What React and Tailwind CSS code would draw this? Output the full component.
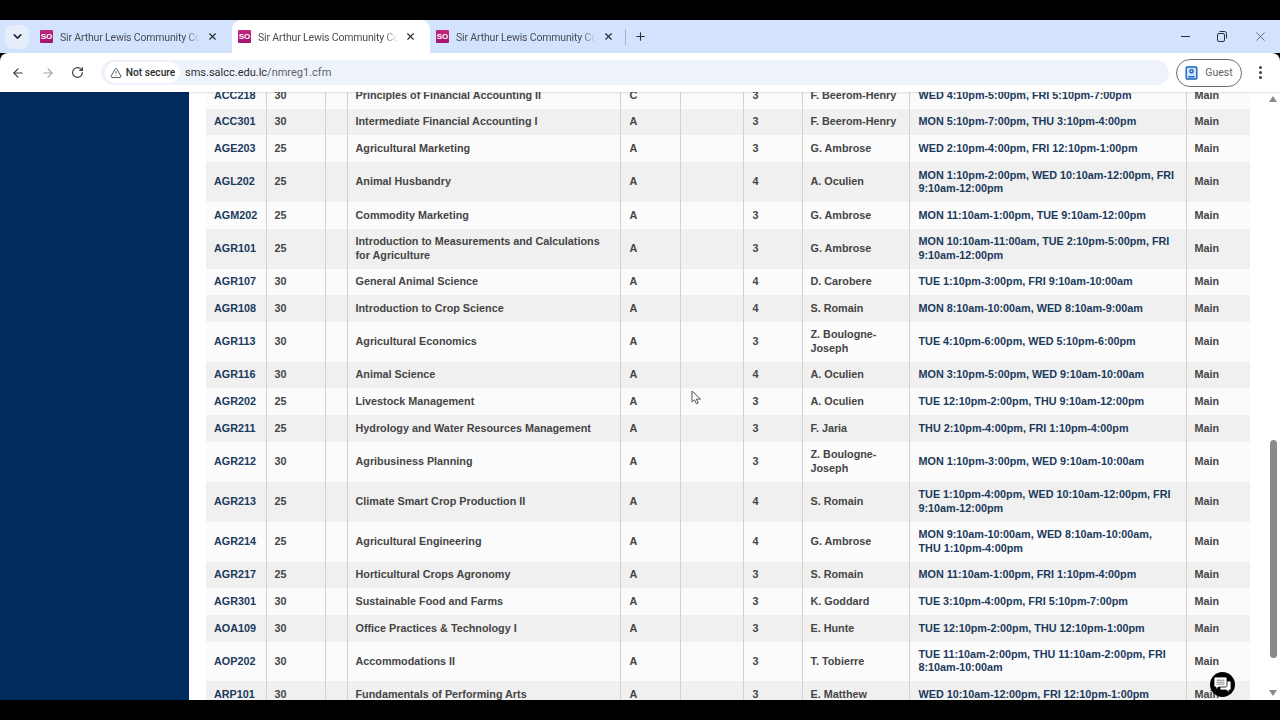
import React from "react";
import { ArrowLeft, ArrowRight, ChevronDown, Plus, RotateCw, TriangleAlert, X } from "lucide-react";

const rows = [
  ["ACC218", "30", "Principles of Financial Accounting II", "C", "3", "F. Beerom-Henry", "WED 4:10pm-5:00pm, FRI 5:10pm-7:00pm"],
  ["ACC301", "30", "Intermediate Financial Accounting I", "A", "3", "F. Beerom-Henry", "MON 5:10pm-7:00pm, THU 3:10pm-4:00pm"],
  ["AGE203", "25", "Agricultural Marketing", "A", "3", "G. Ambrose", "WED 2:10pm-4:00pm, FRI 12:10pm-1:00pm"],
  ["AGL202", "25", "Animal Husbandry", "A", "4", "A. Oculien", "MON 1:10pm-2:00pm, WED 10:10am-12:00pm, FRI 9:10am-12:00pm"],
  ["AGM202", "25", "Commodity Marketing", "A", "3", "G. Ambrose", "MON 11:10am-1:00pm, TUE 9:10am-12:00pm"],
  ["AGR101", "25", "Introduction to Measurements and Calculations for Agriculture", "A", "3", "G. Ambrose", "MON 10:10am-11:00am, TUE 2:10pm-5:00pm, FRI 9:10am-12:00pm"],
  ["AGR107", "30", "General Animal Science", "A", "4", "D. Carobere", "TUE 1:10pm-3:00pm, FRI 9:10am-10:00am"],
  ["AGR108", "30", "Introduction to Crop Science", "A", "4", "S. Romain", "MON 8:10am-10:00am, WED 8:10am-9:00am"],
  ["AGR113", "30", "Agricultural Economics", "A", "3", "Z. Boulogne-Joseph", "TUE 4:10pm-6:00pm, WED 5:10pm-6:00pm"],
  ["AGR116", "30", "Animal Science", "A", "4", "A. Oculien", "MON 3:10pm-5:00pm, WED 9:10am-10:00am"],
  ["AGR202", "25", "Livestock Management", "A", "3", "A. Oculien", "TUE 12:10pm-2:00pm, THU 9:10am-12:00pm"],
  ["AGR211", "25", "Hydrology and Water Resources Management", "A", "3", "F. Jaria", "THU 2:10pm-4:00pm, FRI 1:10pm-4:00pm"],
  ["AGR212", "30", "Agribusiness Planning", "A", "3", "Z. Boulogne-Joseph", "MON 1:10pm-3:00pm, WED 9:10am-10:00am"],
  ["AGR213", "25", "Climate Smart Crop Production II", "A", "4", "S. Romain", "TUE 1:10pm-4:00pm, WED 10:10am-12:00pm, FRI 9:10am-12:00pm"],
  ["AGR214", "25", "Agricultural Engineering", "A", "4", "G. Ambrose", "MON 9:10am-10:00am, WED 8:10am-10:00am, THU 1:10pm-4:00pm"],
  ["AGR217", "25", "Horticultural Crops Agronomy", "A", "3", "S. Romain", "MON 11:10am-1:00pm, FRI 1:10pm-4:00pm"],
  ["AGR301", "30", "Sustainable Food and Farms", "A", "3", "K. Goddard", "TUE 3:10pm-4:00pm, FRI 5:10pm-7:00pm"],
  ["AOA109", "30", "Office Practices & Technology I", "A", "3", "E. Hunte", "TUE 12:10pm-2:00pm, THU 12:10pm-1:00pm"],
  ["AOP202", "30", "Accommodations II", "A", "3", "T. Tobierre", "TUE 11:10am-2:00pm, THU 11:10am-2:00pm, FRI 8:10am-10:00am"],
  ["ARP101", "30", "Fundamentals of Performing Arts", "A", "3", "E. Matthew", "WED 10:10am-12:00pm, FRI 12:10pm-1:00pm"],
];

const Tab = ({ active }) => (
  <div className={`flex items-center w-[198px] h-[33px] pl-[6px] shrink-0 ${active ? "bg-white rounded-t-[9px]" : ""}`}>
    <div className="w-[13px] h-[13px] bg-gradient-to-b from-[#c4267f] to-[#a3146f] rounded-[1px] text-white text-[8px] font-bold leading-[13px] text-center">SO</div>
    <div className="ml-[7px] w-[147px] pt-[2px] whitespace-nowrap text-[10.5px] tracking-[-0.16px] text-[#4a4d52] [font-family:Roboto,sans-serif] [mask-image:linear-gradient(to_right,black_86%,transparent_95%)]">
      Sir Arthur Lewis Community Col
    </div>
    <X size={11} strokeWidth={2.5} className="text-[#2a2d31]" />
  </div>
);

const cell = "border-r border-[#d2d2d2] px-[8px] py-[6.67px] align-middle";

export default function App() {
  return (
    <div className="h-[720px] w-[1280px] bg-black overflow-hidden flex flex-col pt-[20px] pb-[20px] [font-family:'Liberation_Sans',Arial,sans-serif]">
      <div className="h-[33px] bg-[#d3e3fd] flex items-center relative shrink-0">
        <div className="w-[24px] h-[24px] ml-[5px] rounded-lg bg-[#e6eefc] flex items-center justify-center shrink-0">
          <ChevronDown size={13} strokeWidth={3} className="text-[#1f2937]" />
        </div>
        <div className="flex ml-[5px]">
          <Tab />
          <Tab active />
          <Tab />
        </div>
        <div className="w-px h-[16px] bg-[#a8b5c9] -ml-[3px]" />
        <Plus size={13} strokeWidth={2} className="ml-[8px] text-[#2a2d31]" />
        <div className="ml-auto flex items-center gap-[25px] pr-[12px] text-[#2a2d31]">
          <div className="w-[9px] h-px bg-[#2a2d31]" />
          <svg width="13" height="13" viewBox="0 0 13 13" fill="none" stroke="currentColor">
            <rect x="2.5" y="3.5" width="7" height="8" rx="1.5" />
            <path d="M4.5 1.5h5a2 2 0 0 1 2 2v5" />
          </svg>
          <X size={15} strokeWidth={1} />
        </div>
      </div>

      <div className="h-[39px] bg-white flex items-center rounded-t-[8px] shrink-0 relative z-10 shadow-[0_1px_2px_rgba(0,0,0,0.12)]">
        <ArrowLeft size={14} strokeWidth={2} className="ml-[11px] text-[#3b3e43]" />
        <ArrowRight size={14} strokeWidth={2} className="ml-[16px] text-[#a3a7ad]" />
        <RotateCw size={13} strokeWidth={2.2} className="ml-[16px] text-[#3b3e43]" />
        <div className="ml-[17px] w-[1068px] h-[25px] rounded-full bg-[#eef3fb] flex items-center pl-[4px]">
          <div className="h-[21px] w-[75px] rounded-full bg-white flex items-center justify-center gap-[4px] text-[10.2px] font-medium text-[#2a2d31] [font-family:Roboto,sans-serif]">
            <TriangleAlert size={12} strokeWidth={1.5} />
            <span>Not secure</span>
          </div>
          <div className="ml-[5px] pt-[2px] text-[11px] text-[#2a2d31] [font-family:Roboto,sans-serif]">
            sms.salcc.edu.lc<span className="text-[#5f6368]">/nmreg1.cfm</span>
          </div>
        </div>
        <div className="ml-[7px] w-[66px] h-[28px] rounded-full border border-[#6b6f75] flex items-center justify-center gap-[7px] text-[10.5px] text-[#5f6368] [font-family:Roboto,sans-serif]">
          <svg width="13" height="14" viewBox="0 0 13 14" fill="#d3e3fd" stroke="#1a62b8" strokeWidth="1.4">
            <rect x="1.2" y="1" width="10.6" height="12" rx="1" />
            <circle cx="6.5" cy="5.2" r="1.6" fill="none" />
            <path d="M3.2 10.8h6.6" />
          </svg>
          <span className="pt-[1px]">Guest</span>
        </div>
        <div className="ml-[17px] flex flex-col gap-[2px]">
          <div className="w-[3px] h-[3px] rounded-full bg-[#3b3e43]" />
          <div className="w-[3px] h-[3px] rounded-full bg-[#3b3e43]" />
          <div className="w-[3px] h-[3px] rounded-full bg-[#3b3e43]" />
        </div>
      </div>

      <div className="flex-1 flex bg-white overflow-hidden relative">
        <div className="w-[189px] bg-[#002b5c] shrink-0" />
        <div className="w-[1076px] pl-[17px] overflow-hidden">
          <table className="table-fixed border-collapse w-[1044px] -mt-[10px] text-[10.8px] leading-[13.33px] font-bold text-[#454545]">
            <colgroup>
              <col className="w-[60px]" />
              <col className="w-[59px]" />
              <col className="w-[22px]" />
              <col className="w-[273px]" />
              <col className="w-[60px]" />
              <col className="w-[63px]" />
              <col className="w-[59px]" />
              <col className="w-[107px]" />
              <col className="w-[277px]" />
              <col className="w-[64px]" />
            </colgroup>
            <tbody>
              {rows.map((r, i) => (
                <tr key={r[0]} className={i % 2 ? "bg-[#f0f0f0]" : "bg-[#fbfbfb]"}>
                  <td className={`${cell} text-[#1b3a5c]`}>{r[0]}</td>
                  <td className={cell}>{r[1]}</td>
                  <td className={cell}></td>
                  <td className={cell}>{r[2]}</td>
                  <td className={`${cell} pl-[9px]`}>{r[3]}</td>
                  <td className={cell}></td>
                  <td className={`${cell} pl-[9px]`}>{r[4]}</td>
                  <td className={cell}>{r[5]}</td>
                  <td className={`${cell} pl-[9px] pr-[10px] text-[#1b3a5c]`}>{r[6]}</td>
                  <td className="px-[8px] py-[6.67px] align-middle">Main</td>
                </tr>
              ))}
            </tbody>
          </table>
        </div>

        <div className="w-[15px] ml-auto bg-white flex flex-col items-center py-[4px] shrink-0">
          <div className="w-0 h-0 border-x-[4px] border-x-transparent border-b-[6px] border-b-[#8a8a8a]" />
          <div className="w-[7px] h-[218px] mt-[338px] rounded-full bg-[#8a8a8a] ml-[1px]" />
          <div className="w-0 h-0 mt-auto border-x-[4px] border-x-transparent border-t-[6px] border-t-[#8a8a8a]" />
        </div>

        <div className="absolute left-[1210px] top-[580px] w-[25px] h-[25px] rounded-full bg-black flex items-center justify-center">
          <svg width="19" height="17" viewBox="0 0 19 17" fill="white" stroke="black" strokeWidth="0.8">
            <path d="M7 5h9.5a1.5 1.5 0 0 1 1.5 1.5v6a1.5 1.5 0 0 1-1.5 1.5H16v2.5L13.5 14H7z" />
            <path d="M2.5 1h10A1.5 1.5 0 0 1 14 2.500v7a1.500 1.500 0 0 1-1.500 1.500H5.500L3 13.500V11h-.5A1.500 1.500 0 0 1 1 9.500v-7A1.500 1.500 0 0 1 2.500 1z" />
            <path d="M3.500 4.200h8M3.500 6.200h8M3.500 8.200h8" stroke="#555" strokeWidth="0.7" fill="none" />
          </svg>
        </div>

        <svg className="absolute left-[691px] top-[298px]" width="11" height="15" viewBox="0 0 11 15" fill="white" stroke="#555" strokeWidth="1">
          <path d="M1 1v11l2.600-2.200 1.800 4 1.800-.8-1.800-3.900H9.500z" />
        </svg>
      </div>
    </div>
  );
}
